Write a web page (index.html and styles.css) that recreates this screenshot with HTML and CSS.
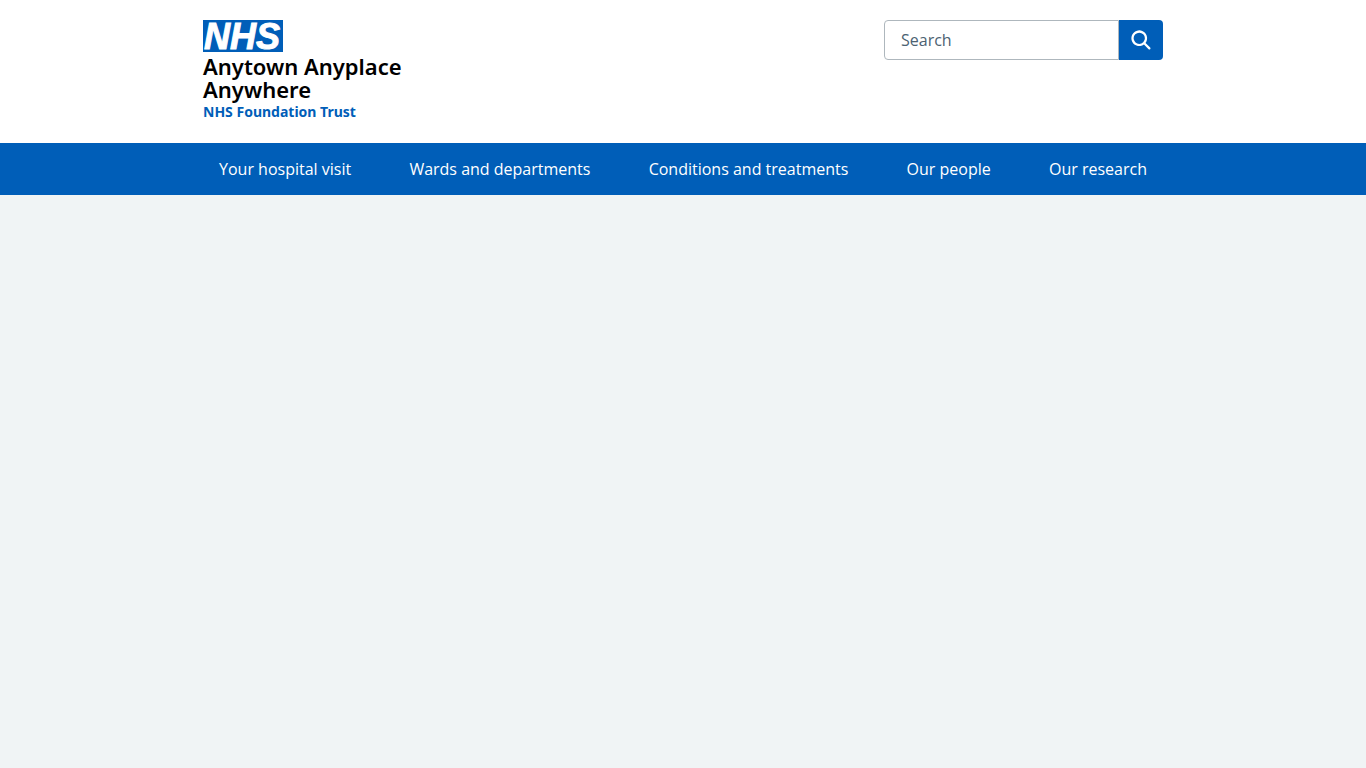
FILE: index.html
```html
<!DOCTYPE html>
<html lang="en">
<head>
<meta charset="utf-8">
<meta name="viewport" content="width=device-width, initial-scale=1">
<title>Anytown Anyplace Anywhere NHS Foundation Trust</title>
<link rel="stylesheet" href="styles.css">
</head>
<body>
<header class="header">
  <div class="container header-top">
    <a class="brand" href="#">
      <svg class="logo" viewBox="0 0 80 32" role="img" aria-label="NHS">
        <rect class="logo-box" width="80" height="32"/>
        <text class="logo-text" x="1" y="29">NHS</text>
      </svg>
      <span class="org-name">Anytown Anyplace<br>Anywhere</span>
      <span class="org-type">NHS Foundation Trust</span>
    </a>
    <form class="search" role="search">
      <input class="search-input" type="search" placeholder="Search" aria-label="Search the website">
      <button class="search-button" type="submit" aria-label="Search">
        <svg class="search-icon" viewBox="0 0 24 24" aria-hidden="true"><path d="M19.71 18.29l-4.11-4.1a7 7 0 1 0-1.41 1.41l4.1 4.11a1 1 0 0 0 1.42 0 1 1 0 0 0 0-1.42zM5 10a5 5 0 1 1 5 5 5 5 0 0 1-5-5z"/></svg>
      </button>
    </form>
  </div>
  <nav class="nav" aria-label="Menu">
    <ul class="container nav-list">
      <li><a class="nav-link" href="#">Your hospital visit</a></li>
      <li><a class="nav-link" href="#">Wards and departments</a></li>
      <li><a class="nav-link" href="#">Conditions and treatments</a></li>
      <li><a class="nav-link" href="#">Our people</a></li>
      <li><a class="nav-link" href="#">Our research</a></li>
    </ul>
  </nav>
</header>
</body>
</html>
```
FILE: styles.css
```css
* {
  box-sizing: border-box;
}

body {
  margin: 0;
  background: #f0f4f5;
  font-family: "Open Sans", "Noto Sans", sans-serif;
  font-size: 16px;
  line-height: 24px;
}

.header {
  background: #fff;
}

.container {
  max-width: 960px;
  margin: 0 auto;
}

.header-top {
  display: flex;
  justify-content: space-between;
  align-items: flex-start;
  padding: 20px 0;
}

.brand {
  display: flex;
  flex-direction: column;
  color: #000;
  font-family: "Noto Sans", "Open Sans", sans-serif;
  text-decoration: none;
}

.logo {
  display: block;
  width: 80px;
  height: 32px;
  margin-bottom: 3px;
  overflow: visible;
}

.logo-box {
  fill: #005eb8;
}

.logo-text {
  fill: #fff;
  stroke: #fff;
  stroke-width: 1px;
  font: italic bold 36px "Liberation Sans", Arial, sans-serif;
}

.org-name {
  font-size: 22px;
  font-weight: 600;
  line-height: 23px;
}

.org-type {
  color: #005eb8;
  font-size: 14px;
  font-weight: 700;
  line-height: 22px;
}

.search {
  display: flex;
}

.search-input {
  width: 235px;
  height: 40px;
  padding: 0 16px;
  border: 1px solid #aeb7bd;
  border-radius: 4px 0 0 4px;
  background: #fff;
  font: inherit;
  appearance: none;
}

.search-input::placeholder {
  color: #4c6272;
  opacity: 1;
}

.search-button {
  display: flex;
  align-items: center;
  justify-content: center;
  width: 44px;
  height: 40px;
  padding: 0;
  border: 0;
  border-radius: 0 4px 4px 0;
  background: #005eb8;
}

.search-icon {
  width: 27px;
  height: 27px;
  fill: #fff;
}

.nav {
  background: #005eb8;
}

.nav-list {
  display: flex;
  justify-content: space-between;
  padding: 0;
  list-style: none;
}

.nav-link {
  display: block;
  padding: 14px 16px;
  color: #fff;
  text-decoration: none;
}
```
